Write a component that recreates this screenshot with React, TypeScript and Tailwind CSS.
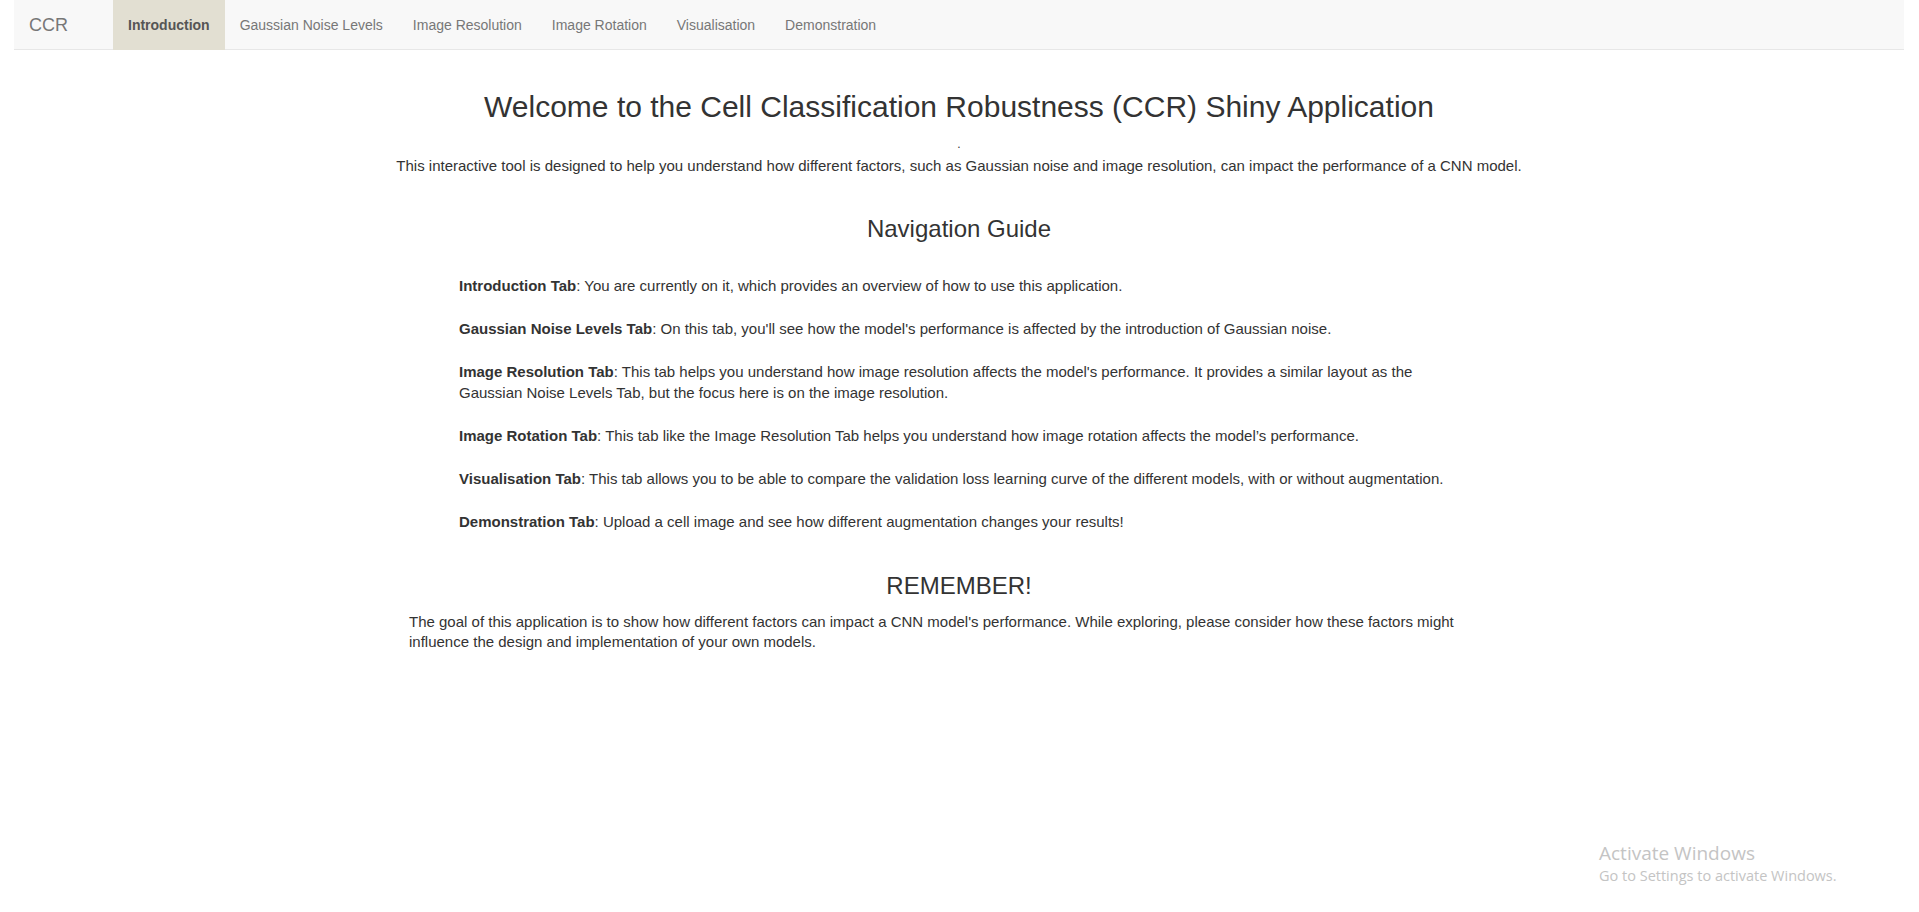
const tabs = [
  'Introduction',
  'Gaussian Noise Levels',
  'Image Resolution',
  'Image Rotation',
  'Visualisation',
  'Demonstration',
]

const guide: { label: string; text: string }[] = [
  {
    label: 'Introduction Tab',
    text: ': You are currently on it, which provides an overview of how to use this application.',
  },
  {
    label: 'Gaussian Noise Levels Tab',
    text: ": On this tab, you'll see how the model's performance is affected by the introduction of Gaussian noise.",
  },
  {
    label: 'Image Resolution Tab',
    text: ": This tab helps you understand how image resolution affects the model's performance. It provides a similar layout as the Gaussian Noise Levels Tab, but the focus here is on the image resolution.",
  },
  {
    label: 'Image Rotation Tab',
    text: ': This tab like the Image Resolution Tab helps you understand how image rotation affects the model\u2019s performance.',
  },
  {
    label: 'Visualisation Tab',
    text: ': This tab allows you to be able to compare the validation loss learning curve of the different models, with or without augmentation.',
  },
  {
    label: 'Demonstration Tab',
    text: ': Upload a cell image and see how different augmentation changes your results!',
  },
]

function Navbar() {
  return (
    <nav className="flex h-[50px] items-stretch border-b border-[#e7e7e7] bg-[#f8f8f8]">
      <span className="px-[15px] py-[15px] text-[18px] leading-5 text-[#777]">CCR</span>
      <ul className="ml-[30px] flex">
        {tabs.map((t, i) => (
          <li key={t}>
            <a
              href="#"
              className={
                i === 0
                  ? 'block bg-[#e2dfd2] px-[15px] py-[15px] text-[14px] font-bold leading-5 text-[#555]'
                  : 'block px-[15px] py-[15px] text-[14px] leading-5 text-[#777]'
              }
            >
              {t}
            </a>
          </li>
        ))}
      </ul>
    </nav>
  )
}

export default function App() {
  return (
    <div
      className="relative min-h-[912px] bg-white pl-[14px] pr-[15px] text-[15px] leading-[21px] text-[#333]"
      style={{ fontFamily: '"Liberation Sans", Arial, Helvetica, sans-serif' }}
    >
      <Navbar />

      <main className="flex flex-col items-center">
        <h2 className="mt-[40px] text-[30px] leading-[1.1]">
          Welcome to the Cell Classification Robustness (CCR) Shiny Application
        </h2>
        <div className="mt-[11px] text-[12px] leading-5">.</div>
        <p className="mt-[1px]">
          This interactive tool is designed to help you understand how different factors, such as
          Gaussian noise and image resolution, can impact the performance of a CNN model.
        </p>

        <h3 className="mt-[40px] text-[24px] leading-[1.1]">Navigation Guide</h3>

        <div className="mt-[33px] w-[1100px] pl-[50px] pr-[46px]">
          <div className="flex flex-col gap-[22px]">
            {guide.map((g) => (
              <p key={g.label}>
                <strong className="font-bold">{g.label}</strong>
                {g.text}
              </p>
            ))}
          </div>
        </div>

        <h3 className="mt-[41px] text-[24px] leading-[1.1]">REMEMBER!</h3>
        <p className="mt-[12px] w-[1100px] leading-5">
          The goal of this application is to show how different factors can impact a CNN model's
          performance. While exploring, please consider how these factors might influence the design
          and implementation of your own models.
        </p>
      </main>

      <div
        className="absolute left-[1599px] top-[840px] text-[#c4c4c4]"
        style={{ fontFamily: '"Open Sans", "Noto Sans", sans-serif' }}
      >
        <div className="text-[19px] leading-[26px]">Activate Windows</div>
        <div className="text-[14.5px] leading-5">Go to Settings to activate Windows.</div>
      </div>
    </div>
  )
}
